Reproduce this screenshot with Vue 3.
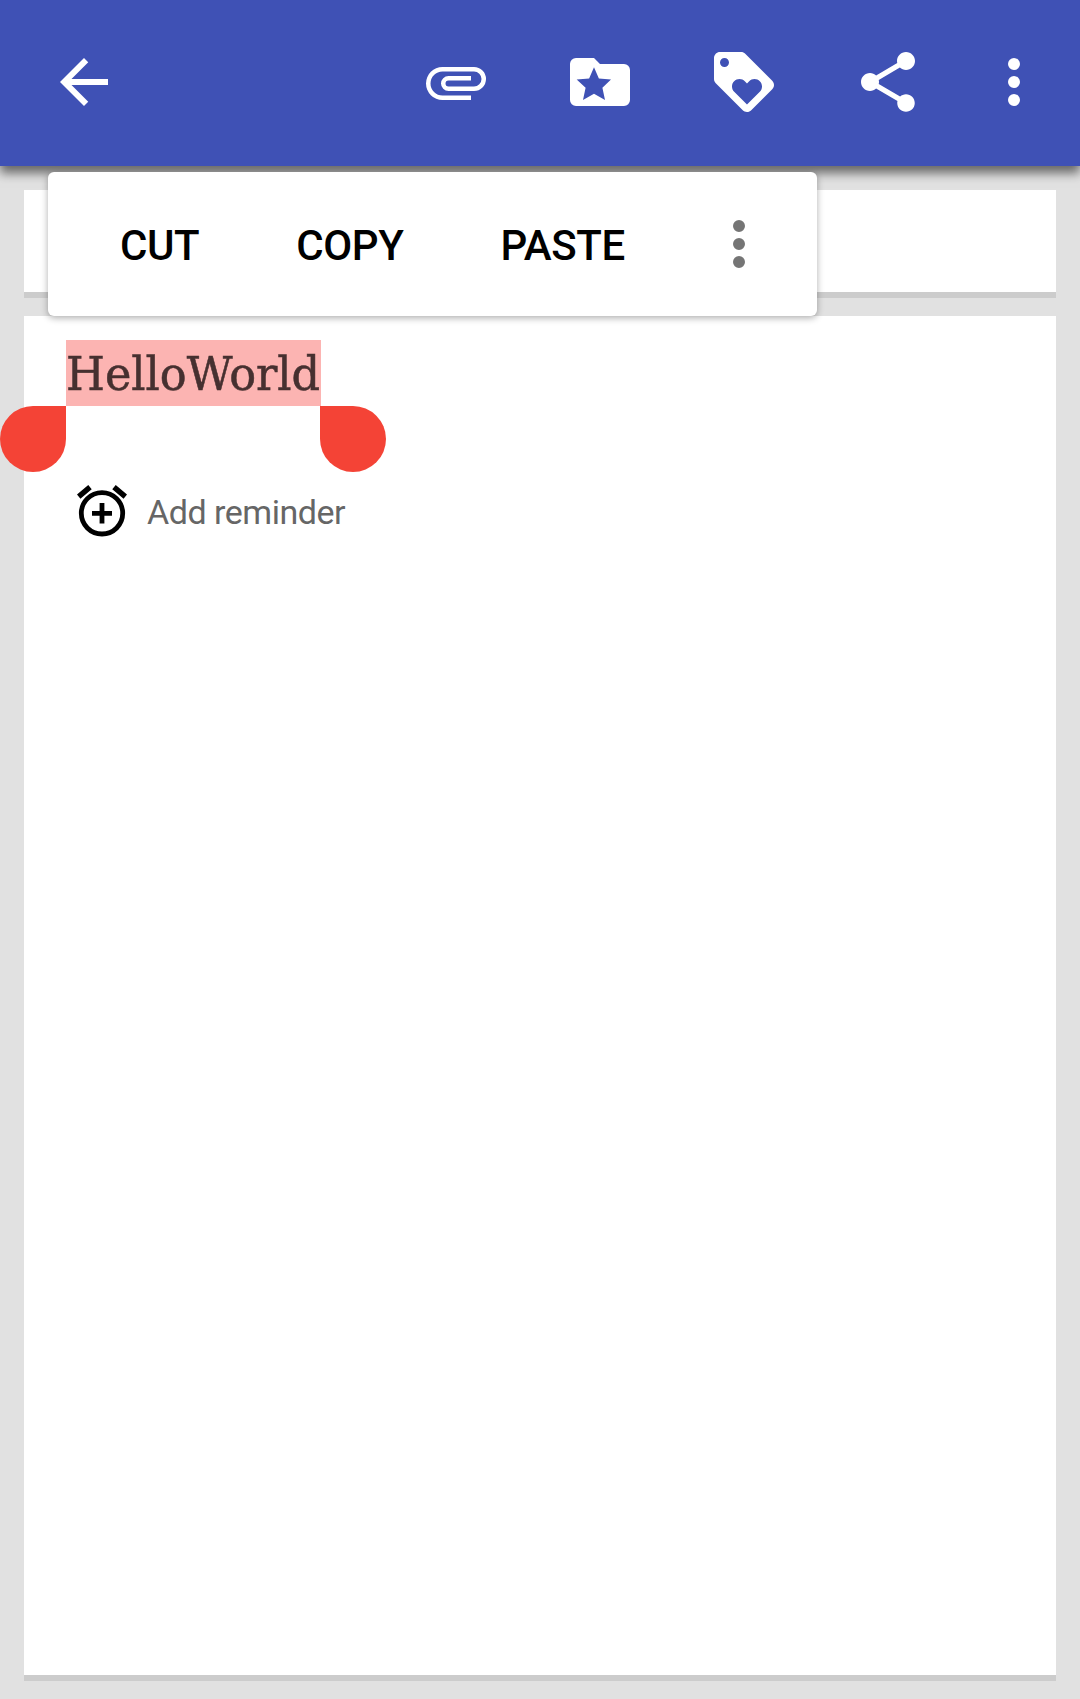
<script setup>
const actions = [
  {
    name: 'Attach',
    path: 'M7.5 18A5.5 5.5 0 0 1 2 12.5 5.5 5.5 0 0 1 7.5 7H18a4 4 0 0 1 0 8H9.5a2.5 2.5 0 0 1 0-5H17v1.5H9.5a1 1 0 0 0 0 2H18a2.5 2.5 0 0 0 0-5H7.5a4 4 0 0 0 0 8H17V18z',
  },
  {
    name: 'Category',
    path: 'M20 6h-8l-2-2H4a2 2 0 0 0-2 2v12a2 2 0 0 0 2 2h16a2 2 0 0 0 2-2V8a2 2 0 0 0-2-2zM13.67 18L10 15.9 6.33 18 7.2 13.95 4.22 11.2l4.15-.4L10 7.05l1.63 3.75 4.04.4-2.87 2.75z',
  },
  {
    name: 'Tag',
    path: 'M21.41 11.58l-9-9C12.05 2.22 11.55 2 11 2H4c-1.1 0-2 .9-2 2v7c0 .55.22 1.05.59 1.42l9 9c.36.36.86.58 1.41.58.55 0 1.05-.22 1.41-.59l7-7c.37-.36.59-.86.59-1.41 0-.55-.23-1.06-.59-1.42zM5.5 7C4.67 7 4 6.33 4 5.5S4.67 4 5.5 4 7 4.67 7 5.5 6.33 7 5.5 7zm11.77 8.27L13 19.54l-4.27-4.27C8.28 14.81 8 14.19 8 13.5c0-1.38 1.12-2.5 2.5-2.5.69 0 1.32.28 1.77.74l.73.72.73-.73c.45-.45 1.08-.73 1.77-.73 1.38 0 2.5 1.12 2.5 2.5 0 .69-.28 1.32-.73 1.77z',
  },
  {
    name: 'Share',
    path: 'M18 16.08c-.76 0-1.44.3-1.96.77L8.91 12.7c.05-.23.09-.46.09-.7s-.04-.47-.09-.7l7.05-4.11c.54.5 1.25.81 2.04.81 1.66 0 3-1.34 3-3s-1.34-3-3-3-3 1.34-3 3c0 .24.04.47.09.7L8.04 9.81C7.5 9.31 6.79 9 6 9c-1.66 0-3 1.34-3 3s1.34 3 3 3c.79 0 1.5-.31 2.04-.81l7.12 4.16c-.05.21-.08.43-.08.65 0 1.61 1.31 2.92 2.92 2.92s2.92-1.31 2.92-2.92-1.31-2.92-2.92-2.92z',
  },
]
const dots = 'M12 8a2 2 0 1 0 0-4 2 2 0 0 0 0 4zm0 2a2 2 0 1 0 0 4 2 2 0 0 0 0-4zm0 6a2 2 0 1 0 0 4 2 2 0 0 0 0-4z'
const edits = ['CUT', 'COPY', 'PASTE']
</script>

<template>
  <div class="screen">
    <header class="bar">
      <svg class="icon" viewBox="0 0 24 24" aria-label="Back">
        <path d="M20 11H7.83l5.59-5.59L12 4l-8 8 8 8 1.41-1.41L7.83 13H20v-2z" />
      </svg>
      <nav class="actions">
        <svg v-for="a in actions" :key="a.name" class="icon" viewBox="0 0 24 24" :aria-label="a.name">
          <path :d="a.path" fill-rule="evenodd" />
        </svg>
      </nav>
      <svg class="icon more" viewBox="0 0 24 24" aria-label="More"><path :d="dots" /></svg>
    </header>

    <main class="content">
      <section class="card title"></section>
      <section class="card note">
        <div class="selection">
          <span class="word">HelloWorld</span>
          <i class="handle start"></i>
          <i class="handle end"></i>
        </div>
        <div class="reminder">
          <svg class="alarm" viewBox="0 0 50 52">
            <g fill="none" stroke="#000">
              <circle cx="25" cy="28.3" r="20.7" stroke-width="4.8" />
              <path d="M25 18v20.6M15 28.3h20" stroke-width="4.8" />
              <path d="M1.7 11.6L13 2.2M48.3 11.6L37 2.2" stroke-width="5.4" />
            </g>
          </svg>
          <span class="label">Add reminder</span>
        </div>
      </section>
    </main>

    <div class="popup">
      <span v-for="e in edits" :key="e" class="edit">{{ e }}</span>
      <svg class="icon grey" viewBox="0 0 24 24" aria-label="More options"><path :d="dots" /></svg>
    </div>
  </div>
</template>

<style>
body {
  margin: 0;
}
</style>

<style scoped>
.screen {
  position: relative;
  display: flex;
  flex-direction: column;
  box-sizing: border-box;
  width: 1080px;
  height: 1699px;
  overflow: hidden;
  background: #e1e1e1;
  font-family: Roboto, sans-serif;
}
.bar {
  flex: none;
  display: flex;
  align-items: center;
  box-sizing: border-box;
  height: 166px;
  padding: 0 30px 2px 48px;
  background: #3f51b5;
  box-shadow: 0 7px 10px rgba(0, 0, 0, 0.55);
}
.icon {
  flex: none;
  display: block;
  width: 72px;
  height: 72px;
  fill: #fff;
}
.actions {
  display: flex;
  gap: 72px;
  margin-left: auto;
}
.more {
  margin-left: 54px;
}
.content {
  flex: 1;
  display: flex;
  flex-direction: column;
  gap: 18px;
  padding: 24px 24px 18px;
}
.card {
  box-sizing: border-box;
  background: #fff;
  border-bottom: 6px solid #ccc;
}
.title {
  flex: none;
  height: 108px;
}
.note {
  flex: 1;
  padding: 24px 42px;
}
.selection {
  position: relative;
  width: 255px;
  height: 66px;
  background: #fcb4b2;
}
.word {
  display: block;
  width: 255px;
  padding-top: 1px;
  font: 47px/66px "Roboto Slab", "DejaVu Serif Condensed", "DejaVu Serif", serif;
  font-stretch: condensed;
  white-space: nowrap;
  color: #463030;
  -webkit-text-stroke: 0.5px #463030;
  transform: scaleX(1.055);
  transform-origin: 0 0;
}
.handle {
  position: absolute;
  top: 66px;
  width: 66px;
  height: 66px;
  background: #f44336;
}
.start {
  left: -66px;
  border-radius: 33px 0 33px 33px;
}
.end {
  left: 254px;
  border-radius: 0 33px 33px 33px;
}
.reminder {
  display: flex;
  align-items: center;
  height: 52px;
  margin: 79px 0 0 11px;
}
.alarm {
  width: 50px;
  height: 52px;
}
.label {
  margin: 2px 0 0 20px;
  font-size: 34px;
  line-height: 40px;
  letter-spacing: -0.48px;
  color: #666;
}
.popup {
  position: absolute;
  left: 48px;
  top: 172px;
  display: flex;
  align-items: center;
  box-sizing: border-box;
  width: 769px;
  height: 144px;
  padding: 0 42px 0 72px;
  border-radius: 6px;
  background: #fff;
  box-shadow: 0 2px 7px rgba(0, 0, 0, 0.32);
}
.edit {
  margin-right: 97px;
  padding-top: 4px;
  font-size: 42px;
  font-weight: 500;
  line-height: 50px;
  letter-spacing: -0.4px;
  color: #000;
}
.edit:nth-child(3) {
  margin-right: 0;
}
.popup .grey {
  margin-left: auto;
  fill: #757575;
}
</style>
